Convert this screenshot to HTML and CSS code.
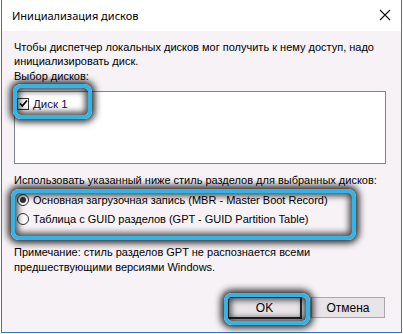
FILE: index.html
```html
<!DOCTYPE html>
<html lang="ru">
<head>
<meta charset="utf-8">
<title>Инициализация дисков</title>
<link rel="stylesheet" href="styles.css">
</head>
<body>
<div class="window">
  <div class="titlebar">
    <span class="title">Инициализация дисков</span>
    <svg class="close" width="12" height="12" viewBox="0 0 12 12"><path d="M1 1L11 11M11 1L1 11" stroke="#111" stroke-width="1.1" fill="none"/></svg>
  </div>
  <div class="content">
    <p class="intro">Чтобы диспетчер локальных дисков мог получить к нему доступ, надо<br>инициализировать диск.</p>
    <div class="label">Выбор дисков:</div>
    <div class="listbox">
      <div class="item">
        <span class="checkbox"><svg width="9" height="9" viewBox="0 0 9 9"><path d="M1 4.5L3.3 7L8 1.5" stroke="#000" stroke-width="1.8" fill="none"/></svg></span>
        <span class="item-text">Диск 1</span>
      </div>
    </div>
    <div class="label label2">Использовать указанный ниже стиль разделов для выбранных дисков:</div>
    <div class="radios">
      <div class="radio-row"><span class="radio checked"><span class="dot"></span></span><span>Основная загрузочная запись (MBR - Master Boot Record)</span></div>
      <div class="radio-row"><span class="radio"></span><span>Таблица с GUID разделов (GPT - GUID Partition Table)</span></div>
    </div>
    <p class="note">Примечание: стиль разделов GPT не распознается всеми<br>предшествующими версиями Windows.</p>
    <div class="buttons">
      <button class="btn default">OK</button>
      <button class="btn">Отмена</button>
    </div>
  </div>
  <div class="hl hl-disk"></div>
  <div class="hl hl-radios"></div>
  <div class="hl hl-ok"></div>
</div>
</body>
</html>
```
FILE: styles.css
```css
* { box-sizing: border-box; }
html, body { margin: 0; padding: 0; background: #ffffff; }
body { width: 403px; height: 334px; overflow: hidden; }
.window {
  position: relative;
  margin-left: 1px;
  width: 401px;
  height: 333px;
  border: 1px solid #2e78c4;
  border-top: none;
  background: #f6f2f6;
  font-family: "Liberation Sans", Arial, sans-serif;
  font-size: 11px;
  color: #000;
}
.titlebar {
  height: 31px;
  background: #ffffff;
  display: flex;
  align-items: center;
  justify-content: space-between;
  padding: 0 10px 0 10px;
}
.title {
  font-family: "Noto Sans", "Open Sans", sans-serif;
  font-size: 11px;
  color: #000;
  margin-top: -1px;
}
.close { margin-top: -1px; }
.content { padding: 9px 16px 0 12px; }
p { margin: 0; }
.intro { line-height: 14px; }
.label { line-height: 14px; margin-top: 1px; }
.listbox {
  margin-top: 8px;
  width: 372px;
  height: 73px;
  background: #fff;
  border: 1px solid #7f8590;
  padding: 5px 0 0 2px;
}
.item { display: flex; align-items: center; gap: 4px; height: 13px; }
.checkbox {
  width: 12px; height: 12px;
  border: 1px solid #333;
  background: #fff;
  display: flex; align-items: center; justify-content: center;
}
.item-text { color: #1a0a4a; font-size: 11.5px; }
.label2 { margin-top: 9px; }
.radios { margin-top: 6px; display: flex; flex-direction: column; gap: 6px; padding-left: 3px; }
.radio-row { display: flex; align-items: center; gap: 4px; height: 13px; font-size: 11px; }
.radio {
  width: 12px; height: 12px;
  border-radius: 50%;
  border: 1px solid #333;
  background: #fff;
  display: flex; align-items: center; justify-content: center;
}
.dot { width: 6px; height: 6px; border-radius: 50%; background: #333; }
.note { margin-top: 20px; line-height: 15px; }
.buttons {
  margin-top: 22px;
  display: flex;
  justify-content: flex-end;
  gap: 9px;
}
.btn {
  width: 74px; height: 21px;
  font-family: "Liberation Sans", Arial, sans-serif;
  font-size: 12px;
  color: #000;
  background: #e8e4e8;
  border: 1px solid #aaa6aa;
  padding: 0;
}
.btn.default { border: 2px solid #2a2a30; width: 75px; height: 23px; margin-top: -1px; }
.hl {
  position: absolute;
  border: 4px solid #33b4e6;
  border-radius: 8px;
  box-shadow: 0 0 7px 3px rgba(0,0,0,0.85), inset 0 0 6px 3px rgba(0,0,0,0.7);
}
.hl-disk { left: 11px; top: 84px; width: 79px; height: 35px; }
.hl-radios { left: 9px; top: 189px; width: 345px; height: 51px; }
.hl-ok { left: 222px; top: 293px; width: 86px; height: 32px; }
```
